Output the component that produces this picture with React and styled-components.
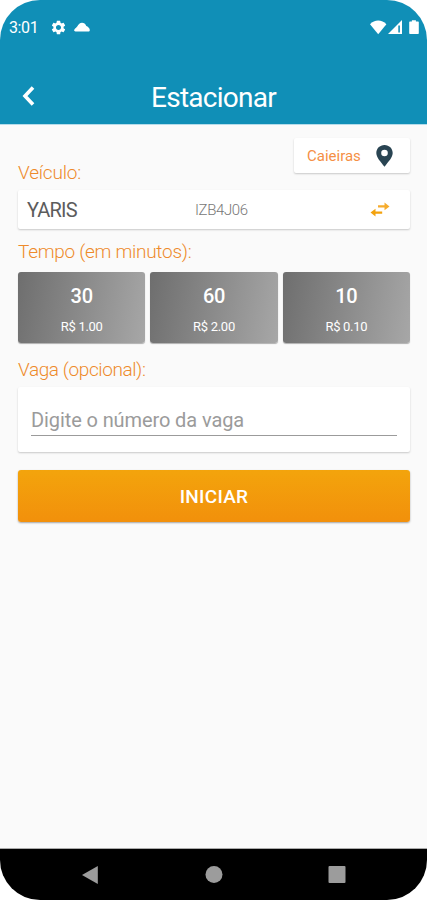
import React from "react";
import styled, { createGlobalStyle } from "styled-components";
import { MdSettings } from "react-icons/md";

const times = [
  { minutes: "30", price: "R$ 1.00" },
  { minutes: "60", price: "R$ 2.00" },
  { minutes: "10", price: "R$ 0.10" },
];

const App = () => {
  return (
    <Screen>
      <GlobalStyle />

      <Header>
        <StatusBar>
          <Clock>3:01</Clock>
          <MdSettings size={17} />
          <CloudIcon viewBox="0 0 16 10">
            <path d="M1.500 9.500C0 9.500-.2 8 .6 7.200 1.200 6.400 2.300 5.700 3.200 4.600 4.500 2.100 6 .8 8 .8c2 0 3.400 1.100 4.300 3.300 1.700.6 3 1.900 3.400 3.500.3 1.200-.3 1.900-1.300 1.900z" />
          </CloudIcon>
          <StatusIcons viewBox="0 0 49 15">
            <path d="M0 4.200C4.600-.8 11.800-.8 16.400 4.200L8.200 14.300z" />
            <path d="M18 14L32 0v14z" />
            <path d="M28.300 5.500h1.600v7h-1.600z" fill="#108fb7" />
            <path d="M39.600 1.500h2.300V.3h4v1.200h2.200q.7 0 .7.700v11q0 .8-.8.800h-8q-.8 0-.8-.8v-11q0-.7.700-.7z" />
          </StatusIcons>
        </StatusBar>
        <TitleBar>
          <BackButton aria-label="Voltar">
            <svg width="13" height="20" viewBox="0 0 13 20">
              <path d="M11 1.500L3 10l8 8.500" fill="none" stroke="#fff" strokeWidth="3.600" />
            </svg>
          </BackButton>
          <Title>Estacionar</Title>
        </TitleBar>
      </Header>

      <Content>
        <CityCard>
          <City>Caieiras</City>
          <svg width="17" height="22" viewBox="0 0 17 22">
            <path
              fillRule="evenodd"
              d="M8.500 0C3.700 0 .3 3.600.3 8.100c0 4.300 4.300 8.800 8.200 13.700 3.900-4.900 8.200-9.400 8.200-13.700C16.700 3.600 13.300 0 8.500 0zm0 4.700a3.300 3.300 0 1 1 0 6.600 3.300 3.300 0 0 1 0-6.600z"
              fill="#294452"
            />
          </svg>
        </CityCard>

        <Label $spacing="-0.18px">Veículo:</Label>
        <VehicleCard>
          <Model>YARIS</Model>
          <Plate>IZB4J06</Plate>
          <SwapIcon width="20" height="15" viewBox="0 0 20 15">
            <path d="M8 3.300h6.500V.5l5 3.900-5 3.900V5.500H8z" fill="#f6ac2d" />
            <path d="M12.200 9.500H5.500V6.700L.5 10.600l5 3.900v-2.800h6.700z" fill="#f3a20e" />
          </SwapIcon>
        </VehicleCard>

        <Label $spacing="-0.28px">Tempo (em minutos):</Label>
        <TimeRow>
          {times.map(({ minutes, price }) => (
            <TimeButton key={minutes}>
              <Minutes>{minutes}</Minutes>
              <Price>{price}</Price>
            </TimeButton>
          ))}
        </TimeRow>

        <Label $spacing="-0.4px">Vaga (opcional):</Label>
        <SpotCard>
          <SpotInput placeholder="Digite o número da vaga" />
        </SpotCard>

        <StartButton>INICIAR</StartButton>
      </Content>

      <NavBar>
        <svg width="18" height="20" viewBox="0 0 18 20">
          <path d="M0 9.900L15.800 1v18z" fill="#9c9c9c" />
        </svg>
        <svg width="18" height="20" viewBox="0 0 18 20">
          <circle cx="9" cy="9.500" r="8.500" fill="#9c9c9c" />
        </svg>
        <svg width="18" height="20" viewBox="0 0 18 20">
          <rect x=".5" y="1" width="17" height="17" rx="1" fill="#9c9c9c" />
        </svg>
      </NavBar>
    </Screen>
  );
};

export default App;

const GlobalStyle = createGlobalStyle`
  * {
    box-sizing: border-box;
  }

  body {
    margin: 0;
    background: #fff;
    font-family: Roboto, sans-serif;
  }

  svg {
    display: block;
    flex-shrink: 0;
  }

  button {
    border: 0;
    padding: 0;
    font-family: inherit;
  }
`;

const Screen = styled.div`
  display: flex;
  flex-direction: column;
  width: 427px;
  height: 900px;
  overflow: hidden;
  border-radius: 40px;
  background: #fafafa;
`;

const Header = styled.header`
  height: 125px;
  background: #108fb7;
  border-bottom: 1px solid #b5dcea;
  color: #fff;
`;

const StatusBar = styled.div`
  display: flex;
  align-items: center;
  height: 54px;
  padding: 0 8px 0 9px;
`;

const Clock = styled.span`
  width: 41px;
  font-size: 16px;
  line-height: 20px;
  letter-spacing: -0.4px;
  padding-top: 2px;
`;

const CloudIcon = styled.svg`
  width: 16px;
  height: 10px;
  margin-left: 7px;
  fill: #fff;
`;

const StatusIcons = styled.svg`
  width: 49px;
  height: 15px;
  margin-left: auto;
  fill: #fff;
`;

const TitleBar = styled.div`
  display: grid;
  grid-template-columns: 60px 1fr 60px;
  align-items: center;
  height: 70px;
  padding-top: 17px;
`;

const BackButton = styled.button`
  display: flex;
  padding: 0 0 4px 22px;
  background: none;
`;

const Title = styled.h1`
  margin: 0;
  font-size: 28px;
  font-weight: 400;
  line-height: 36px;
  letter-spacing: -0.75px;
  text-align: center;
`;

const Content = styled.main`
  flex: 1;
  display: flex;
  flex-direction: column;
  padding: 13px 17px 0 18px;
`;

const Card = styled.div`
  background: #fff;
  border-radius: 2px;
  box-shadow: 0 1px 2px rgba(0, 0, 0, 0.2);
`;

const CityCard = styled(Card)`
  display: flex;
  align-items: center;
  justify-content: space-between;
  align-self: flex-end;
  width: 116px;
  height: 35px;
  padding: 0 17px 0 13px;
`;

const City = styled.span`
  font-size: 15px;
  color: #f58f45;
`;

const Label = styled.h2`
  margin: 0;
  height: 28px;
  font-size: 19px;
  font-weight: 300;
  line-height: 28px;
  letter-spacing: ${({ $spacing }) => $spacing};
  color: #ee8a2b;

  ${CityCard} + & {
    margin-top: -14px;
  }
`;

const VehicleCard = styled(Card)`
  display: grid;
  grid-template-columns: 168px 1fr auto;
  align-items: center;
  height: 39px;
  margin: 3px 0 9px;
  padding: 0 20px 0 9px;
`;

const Model = styled.span`
  font-size: 20px;
  letter-spacing: -0.8px;
  color: #5c5c5c;
`;

const Plate = styled.span`
  font-size: 15px;
  font-weight: 300;
  letter-spacing: -0.4px;
  color: #777;
`;

const SwapIcon = styled.svg`
  overflow: visible;
`;

const TimeRow = styled.div`
  display: grid;
  grid-template-columns: repeat(3, 1fr);
  gap: 5px;
  margin: 6px 0 13px;
`;

const TimeButton = styled.button`
  display: flex;
  flex-direction: column;
  align-items: center;
  height: 71px;
  padding-top: 12px;
  border-radius: 3px;
  background: linear-gradient(100deg, #6e6e6e, #a7a7a7);
  box-shadow: 0 1px 1px rgba(0, 0, 0, 0.3);
  color: #fff;
`;

const Minutes = styled.span`
  font-size: 20px;
  font-weight: 500;
  line-height: 24px;
  letter-spacing: -0.3px;
`;

const Price = styled.span`
  margin-top: 11px;
  font-size: 13px;
  line-height: 16px;
  letter-spacing: -0.3px;
`;

const SpotCard = styled(Card)`
  height: 65px;
  margin: 3px 0 18px;
  padding: 16px 13px 0;
`;

const SpotInput = styled.input`
  display: block;
  width: 100%;
  height: 33px;
  padding: 1px 0 0;
  border: 0;
  border-bottom: 1px solid #9b9b9b;
  outline: none;
  background: none;
  font-family: Roboto, sans-serif;
  font-size: 20px;
  letter-spacing: -0.1px;

  &::placeholder {
    color: #9b9b9b;
  }
`;

const StartButton = styled.button`
  height: 52px;
  border-radius: 3px;
  background: linear-gradient(#f3a40c, #f2900b);
  box-shadow: 0 1px 2px rgba(0, 0, 0, 0.35);
  color: #fff;
  font-size: 19px;
  font-weight: 500;
  letter-spacing: 0.25px;
`;

const NavBar = styled.nav`
  display: flex;
  justify-content: center;
  align-items: center;
  gap: 105px;
  height: 52px;
  border-top: 1px solid #aaa;
  background: #000;
`;
